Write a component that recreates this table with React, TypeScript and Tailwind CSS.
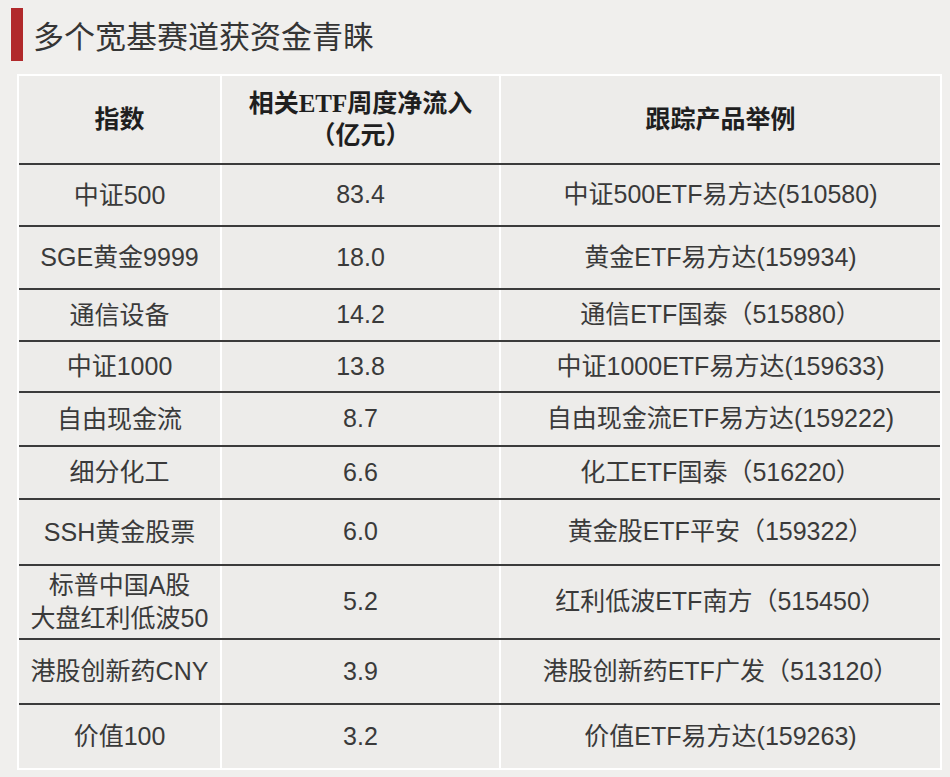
const rows = [
  { name: ['中证500'], flow: '83.4', product: '中证500ETF易方达(510580)', h: 'h-[62px]' },
  { name: ['SGE黄金9999'], flow: '18.0', product: '黄金ETF易方达(159934)', h: 'h-[63px]' },
  { name: ['通信设备'], flow: '14.2', product: '通信ETF国泰（515880）', h: 'h-[52px]' },
  { name: ['中证1000'], flow: '13.8', product: '中证1000ETF易方达(159633)', h: 'h-[51px]' },
  { name: ['自由现金流'], flow: '8.7', product: '自由现金流ETF易方达(159222)', h: 'h-[54px]' },
  { name: ['细分化工'], flow: '6.6', product: '化工ETF国泰（516220）', h: 'h-[53px]' },
  { name: ['SSH黄金股票'], flow: '6.0', product: '黄金股ETF平安（159322）', h: 'h-[66px]' },
  { name: ['标普中国A股', '大盘红利低波50'], flow: '5.2', product: '红利低波ETF南方（515450）', h: 'h-[74px]' },
  { name: ['港股创新药CNY'], flow: '3.9', product: '港股创新药ETF广发（513120）', h: 'h-[65px]' },
  { name: ['价值100'], flow: '3.2', product: '价值ETF易方达(159263)', h: 'h-[65px]' },
];

const cell = 'flex items-center justify-center text-center';

export default function App() {
  return (
    <div className="w-[950px] h-[777px] bg-[#f0efed] pt-2 font-['Liberation_Sans','Noto_Sans_CJK_SC',sans-serif] text-[#3a3a3a]">
      {/* title */}
      <div className="flex items-center gap-[10px] pl-[11px] h-[53px]">
        <div className="w-[12px] h-[53px] bg-[#b1292b]" />
        <h1 className="text-[31px] leading-none text-[#353535] font-['Noto_Sans_CJK_SC',sans-serif] font-normal">
          多个宽基赛道获资金青睐
        </h1>
      </div>

      {/* table */}
      <div className="ml-[17px] mt-[13px] w-[925px] border-2 border-white bg-[#edecea]">
        <div className="grid grid-cols-[203px_279px_1fr] h-[87px] font-['Liberation_Serif','Noto_Sans_CJK_SC',serif] font-bold text-[25px] text-[#1f1f1f]">
          <div className={`${cell} border-r-2 border-white`}>指数</div>
          <div className={`${cell} flex-col leading-[32px] border-r-2 border-white`}>
            <span>相关ETF周度净流入</span>
            <span>（亿元）</span>
          </div>
          <div className={cell}>跟踪产品举例</div>
        </div>

        {rows.map((r) => (
          <div
            key={r.product}
            className={`grid grid-cols-[203px_279px_1fr] border-t-2 border-[#3b3b3b] text-[25px] ${r.h}`}
          >
            <div className={`${cell} flex-col leading-[33px] border-r-2 border-white`}>
              {r.name.map((n) => (
                <span key={n}>{n}</span>
              ))}
            </div>
            <div className={`${cell} border-r-2 border-white`}>{r.flow}</div>
            <div className={cell}>{r.product}</div>
          </div>
        ))}
      </div>
    </div>
  );
}
